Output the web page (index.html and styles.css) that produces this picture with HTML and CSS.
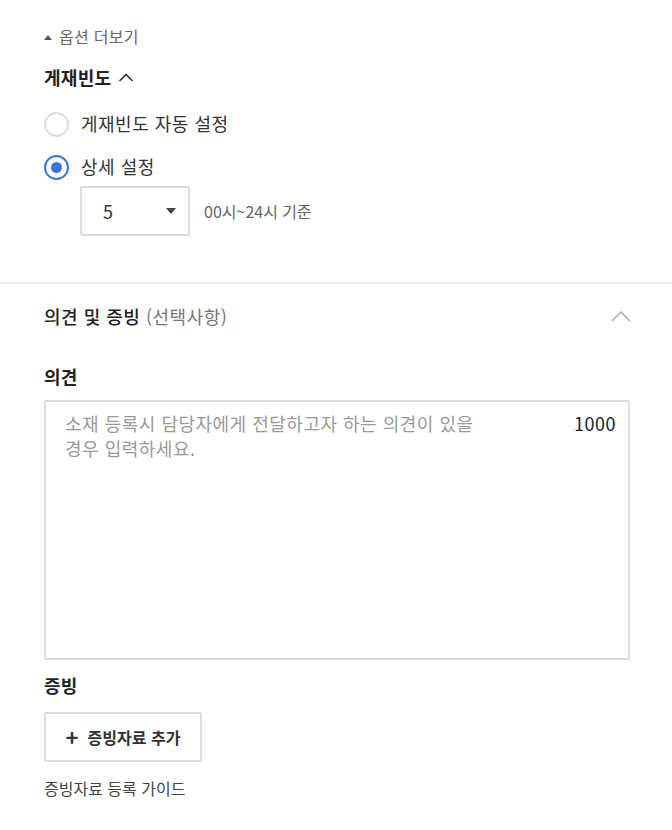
FILE: index.html
```html
<!DOCTYPE html>
<html lang="ko">
<head>
<meta charset="utf-8">
<link rel="stylesheet" href="styles.css">
</head>
<body>
<section class="top">
  <div class="more"><span class="tri"></span>옵션 더보기</div>
  <div class="freq-title">게재빈도
    <svg class="chev-small" width="16" height="12" viewBox="0 0 16 12"><path d="M1.5 10 L8 3.5 L14.5 10" fill="none" stroke="#333" stroke-width="1.6"/></svg>
  </div>
  <label class="radio-row r1"><span class="radio"></span><span>게재빈도 자동 설정</span></label>
  <label class="radio-row r2"><span class="radio checked"></span><span>상세 설정</span></label>
  <div class="select-row">
    <div class="select"><span>5</span><span class="arrow"></span></div>
    <span class="hint">00시~24시 기준</span>
  </div>
</section>
<hr class="divider">
<section class="bottom">
  <div class="sec-head">
    <div class="sec-title">의견 및 증빙 <span class="opt">(선택사항)</span></div>
    <svg class="chev-big" width="20" height="14" viewBox="0 0 20 14"><path d="M1 13 L10 4 L19 13" fill="none" stroke="#aaa" stroke-width="1.5"/></svg>
  </div>
  <div class="label l1">의견</div>
  <div class="ta-wrap">
    <textarea class="ta" placeholder="소재 등록시 담당자에게 전달하고자 하는 의견이 있을&#10;경우 입력하세요."></textarea>
    <span class="count">1000</span>
  </div>
  <div class="label l2">증빙</div>
  <button class="add-btn"><span class="plus">+</span>증빙자료 추가</button>
  <div class="guide">증빙자료 등록 가이드</div>
</section>
</body>
</html>
```
FILE: styles.css
```css
* { box-sizing: border-box; }
html, body { margin: 0; padding: 0; background: #fff; }
body {
  font-family: "Noto Sans CJK KR", "Noto Sans", sans-serif;
  color: #222;
  width: 672px;
  height: 830px;
  overflow: hidden;
}
.top, .bottom { padding: 0 42px 0 44px; }
.top { padding-top: 26px; }

.more {
  height: 20px;
  line-height: 20px;
  font-size: 16px;
  letter-spacing: 0.3px;
  color: #666;
  display: flex;
  align-items: center;
}
.tri {
  width: 0; height: 0;
  border-left: 4.5px solid transparent;
  border-right: 4.5px solid transparent;
  border-bottom: 5px solid #555;
  margin: 2px 7px 0 0;
}
.freq-title {
  margin-top: 19px;
  height: 24px;
  line-height: 24px;
  font-size: 18px;
  letter-spacing: 0.3px;
  font-weight: 700;
  color: #222;
  display: flex;
  align-items: center;
}
.chev-small { margin-left: 7px; margin-top: -1px; }

.radio-row {
  display: flex;
  align-items: center;
  height: 24px;
  font-size: 18px;
  letter-spacing: 0.5px;
  color: #333;
}
.radio-row span:last-child { margin-top: -3px; }
.r1 { margin-top: 23px; }
.r2 { margin-top: 19px; }
.radio {
  width: 25px; height: 25px;
  border: 2px solid #ddd;
  border-radius: 50%;
  margin-right: 12px;
  display: flex;
  align-items: center;
  justify-content: center;
  flex: none;
}
.radio.checked { border-color: #3b73e0; }
.radio.checked::after {
  content: "";
  width: 11px; height: 11px;
  border-radius: 50%;
  background: #3b73e0;
}
.select-row {
  margin-top: 7px;
  margin-left: 36px;
  display: flex;
  align-items: center;
}
.select {
  width: 110px; height: 50px;
  border: 2px solid #ddd;
  border-radius: 2px;
  display: flex;
  align-items: center;
  justify-content: space-between;
  padding: 0 12px 0 21px;
  font-size: 18px;
  color: #333;
}
.arrow {
  width: 0; height: 0;
  border-left: 5px solid transparent;
  border-right: 5px solid transparent;
  border-top: 6px solid #444;
}
.hint { margin-left: 14px; font-size: 16px; color: #666; }

.divider {
  margin: 46px 0 0;
  border: 0;
  height: 2px;
  background: #ebebeb;
}
.sec-head {
  margin-top: 20px;
  height: 24px;
  display: flex;
  align-items: center;
  justify-content: space-between;
}
.sec-title { font-size: 18px; letter-spacing: 0.5px; font-weight: 500; color: #222; }
.opt { color: #777; font-weight: 400; }
.chev-big { margin-right: -1px; margin-top: -2px; }

.label {
  height: 24px;
  line-height: 24px;
  font-size: 18px;
  letter-spacing: 0.3px;
  font-weight: 700;
  color: #222;
}
.l1 { margin-top: 36px; }
.l2 { margin-top: 13px; }

.ta-wrap {
  position: relative;
  margin-top: 12px;
  height: 260px;
}
.ta {
  display: block;
  width: 100%;
  height: 100%;
  border: 2px solid #ddd;
  border-radius: 2px;
  padding: 9px 60px 9px 19px;
  font-family: inherit;
  font-size: 18px;
  letter-spacing: 0.5px;
  line-height: 25px;
  resize: none;
  outline: none;
  color: #333;
}
.ta::placeholder { color: #999; }
.count {
  position: absolute;
  top: 11px;
  right: 14px;
  font-size: 18px;
  letter-spacing: 0.5px;
  line-height: 25px;
  color: #222;
}
.add-btn {
  margin-top: 15px;
  width: 158px;
  height: 50px;
  border: 2px solid #ddd;
  border-radius: 2px;
  background: #fff;
  font-family: inherit;
  font-size: 16px;
  font-weight: 700;
  color: #333;
  display: flex;
  align-items: center;
  justify-content: center;
  padding: 0;
}
.plus { font-size: 22px; font-weight: 700; margin-right: 9px; color: #333; line-height: 1; margin-top: -2px; }
.guide {
  margin-top: 16px;
  height: 20px;
  line-height: 20px;
  font-size: 16px;
  color: #444;
}
```
